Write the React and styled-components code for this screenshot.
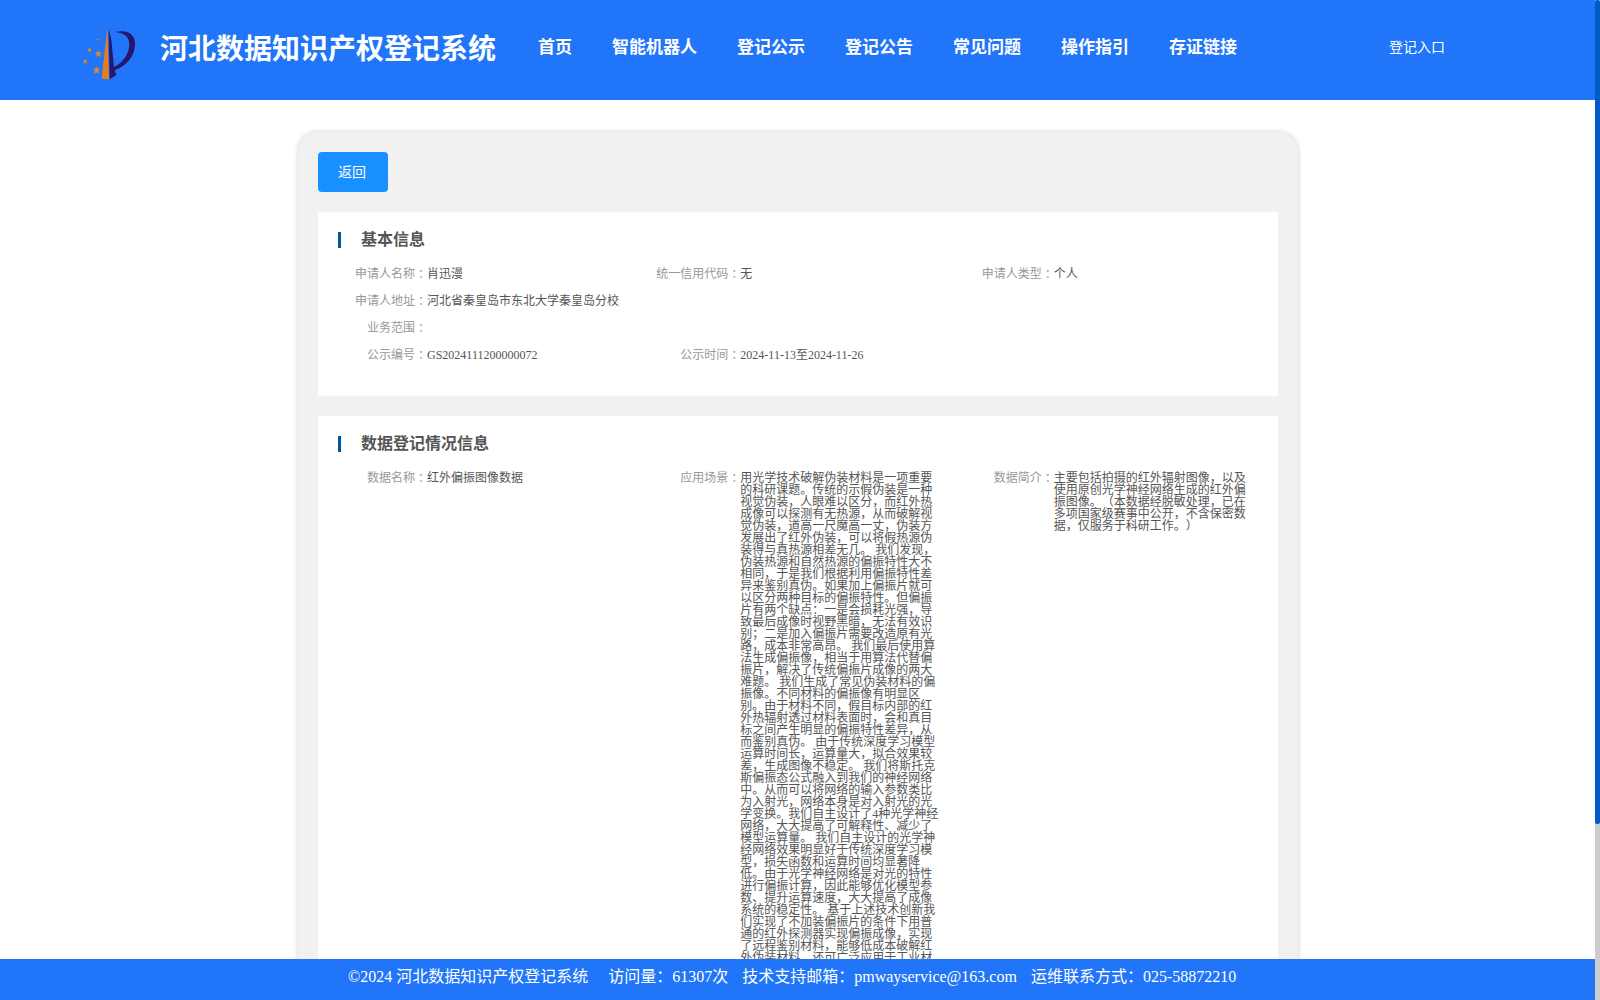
import React from "react";
import styled, { createGlobalStyle } from "styled-components";

const navList = [
  "首页",
  "智能机器人",
  "登记公示",
  "登记公告",
  "常见问题",
  "操作指引",
  "存证链接",
];

const basicRows = [
  [
    { label: "申请人名称", value: "肖迅漫" },
    { label: "统一信用代码", value: "无" },
    { label: "申请人类型", value: "个人" },
  ],
  [{ label: "申请人地址", value: "河北省秦皇岛市东北大学秦皇岛分校" }],
  [{ label: "业务范围", value: "" }],
  [
    { label: "公示编号", value: "GS2024111200000072" },
    { label: "公示时间", value: "2024-11-13至2024-11-26" },
  ],
];

const dataRows = [
  [
    { label: "数据名称", value: "红外偏振图像数据" },
    {
      label: "应用场景",
      value:
        "用光学技术破解伪装材料是一项重要的科研课题。传统的示假伪装是一种视觉伪装，人眼难以区分，而红外热成像可以探测有无热源，从而破解视觉伪装，道高一尺魔高一丈，伪装方发展出了红外伪装，可以将假热源伪装得与真热源相差无几。 我们发现，伪装热源和自然热源的偏振特性大不相同，于是我们根据利用偏振特性差异来鉴别真伪。如果加上偏振片就可以区分两种目标的偏振特性。但偏振片有两个缺点：一是会损耗光强，导致最后成像时视野黑暗，无法有效识别；二是加入偏振片需要改造原有光路，成本非常高昂。 我们最后使用算法生成偏振像，相当于用算法代替偏振片，解决了传统偏振片成像的两大难题。 我们生成了常见伪装材料的偏振像。不同材料的偏振像有明显区别。由于材料不同，假目标内部的红外热辐射透过材料表面时，会和真目标之间产生明显的偏振特性差异，从而鉴别真伪。 由于传统深度学习模型运算时间长，运算量大，拟合效果较差，生成图像不稳定。 我们将斯托克斯偏振态公式融入到我们的神经网络中。从而可以将网络的输入参数类比为入射光，网络本身是对入射光的光学变换。我们自主设计了4种光学神经网络，大大提高了可解释性、减少了模型运算量。 我们自主设计的光学神经网络效果明显好于传统深度学习模型，损失函数和运算时间均显著降低。由于光学神经网络是对光的特性进行偏振计算，因此能够优化模型参数、提升运算速度，大大提高了成像系统的稳定性。 基于上述技术创新我们实现了不加装偏振片的条件下用普通的红外探测器实现偏振成像，实现了远程鉴别材料，能够低成本破解红外伪装材料，还可广泛应用于工业材",
    },
    {
      label: "数据简介",
      value:
        "主要包括拍摄的红外辐射图像，以及使用原创光学神经网络生成的红外偏振图像。（本数据经脱敏处理，已在多项国家级赛事中公开，不含保密数据，仅服务于科研工作。）",
    },
  ],
];

const Logo = () => (
  <svg width="70" height="65" viewBox="0 0 210 195">
    <path d="M97 21L102 178L80 176Z" fill="#e87d1e" />
    <path
      d="M101 24L109 60L117 142C146 126 163 100 163 73C163 50 148 38 120 36C155 28 180 40 180 71C180 108 156 136 119 151L124 165L104 178Z"
      fill="#27156f"
    />
    <g fill="#dc8430">
      <path d="M70 89L73 97L81 98L75 103L77 111L70 107L63 111L65 103L60 98L67 97Z" />
      <path d="M65 138L68 146L76 147L70 152L73 161L65 157L57 161L59 152L54 146L62 146Z" />
      <path d="M44 82L46 87L51 88L47 91L48 96L43 94L38 96L40 90L37 86L42 87Z" />
      <path d="M31 116L33 121L38 122L34 126L35 131L31 129L26 131L27 125L24 121L29 121Z" />
      <path d="M69 54L70 57L73 58L70 60L70 63L67 60L64 60L67 57Z" />
    </g>
  </svg>
);

const Section = ({ title, rows }) => (
  <Card>
    <CardTitle>{title}</CardTitle>
    {rows.map((row, i) => (
      <Row key={i}>
        {row.map(({ label, value }) => (
          <Field key={label}>
            <Label>{label}</Label>
            <Value>{value}</Value>
          </Field>
        ))}
      </Row>
    ))}
  </Card>
);

const App = () => {
  return (
    <Layout>
      <GlobalStyle />
      <Page>
        <Header>
          <Logo />
          <SiteName>河北数据知识产权登记系统</SiteName>
          <Nav>
            {navList.map((item) => (
              <NavItem key={item}>{item}</NavItem>
            ))}
          </Nav>
          <Entry>登记入口</Entry>
        </Header>
        <Main>
          <Panel>
            <BackButton>返回</BackButton>
            <Section title="基本信息" rows={basicRows} />
            <Section title="数据登记情况信息" rows={dataRows} />
          </Panel>
        </Main>
        <Footer>
          <span>©2024 河北数据知识产权登记系统</span>
          <Visits>访问量：61307次</Visits>
          <Contact>技术支持邮箱：pmwayservice@163.com</Contact>
          <Contact>运维联系方式：025-58872210</Contact>
        </Footer>
      </Page>
      <ScrollTrack>
        <ScrollThumb />
      </ScrollTrack>
    </Layout>
  );
};

export default App;

const GlobalStyle = createGlobalStyle`
  * {
    box-sizing: border-box;
  }

  body {
    margin: 0;
    overflow: hidden;
    background: #fff;
    font-family: "Liberation Serif", "Noto Sans CJK SC", serif;
    text-spacing-trim: space-all;
  }
`;

const Layout = styled.div`
  display: flex;
  height: 1000px;
`;

const Page = styled.div`
  display: flex;
  flex-direction: column;
  flex: 1;
  min-width: 0;
`;

const Header = styled.header`
  display: flex;
  flex-shrink: 0;
  height: 100px;
  padding: 20px 0 0 75px;
  color: #fff;
  background: #2175f9;
`;

const SiteName = styled.h1`
  margin: 0 0 0 15px;
  font-size: 28px;
  line-height: 60px;
  white-space: nowrap;
`;

const Nav = styled.nav`
  display: flex;
  gap: 40px;
  margin-left: 42px;
`;

const NavItem = styled.a`
  font-size: 17px;
  font-weight: bold;
  line-height: 55px;
  white-space: nowrap;
`;

const Entry = styled.a`
  margin-left: 152px;
  font-size: 14px;
  line-height: 55px;
  white-space: nowrap;
`;

const Main = styled.main`
  flex: 1;
  min-height: 0;
  padding: 32px 0 0 298px;
  overflow: hidden;
`;

const Panel = styled.div`
  width: 1000px;
  min-height: 900px;
  padding: 20px;
  border-radius: 20px;
  background: #f1f1f1;
  box-shadow: 0 0 5px rgba(0, 0, 0, 0.2);
`;

const BackButton = styled.button`
  display: block;
  width: 70px;
  height: 40px;
  padding: 0 2px 2px 0;
  border: none;
  border-radius: 4px;
  color: #fff;
  background: #1990ff;
  font-family: inherit;
  font-size: 14px;
`;

const Card = styled.section`
  margin-top: 20px;
  padding: 20px 0 20px 20px;
  background: #fff;
`;

const CardTitle = styled.h2`
  height: 16px;
  margin: 0 0 20px;
  padding-left: 20px;
  border-left: 3px solid #00579b;
  color: #555;
  font-size: 16px;
  line-height: 15px;
`;

const Row = styled.div`
  display: grid;
  grid-template-columns: repeat(3, 1fr);
  margin-bottom: 15px;
  font-size: 12px;
  line-height: 12px;
`;

const Field = styled.div`
  display: flex;
`;

const Label = styled.div`
  display: flex;
  justify-content: flex-end;
  width: 89px;
  height: 12px;
  flex-shrink: 0;
  color: #999;

  &::after {
    content: "：";
    font-family: "Noto Sans CJK JP", sans-serif;
  }
`;

const Value = styled.div`
  width: 200px;
  color: #555;
`;

const Footer = styled.footer`
  display: flex;
  flex-shrink: 0;
  height: 41px;
  padding-left: 348px;
  color: #fff;
  background: #2175f9;
  font-size: 16px;
  line-height: 35px;
  white-space: nowrap;
`;

const Visits = styled.span`
  margin-left: 20px;
`;

const Contact = styled.span`
  margin-left: 14px;
`;

const ScrollTrack = styled.div`
  width: 5px;
  background: #ccc;
`;

const ScrollThumb = styled.div`
  height: 824px;
  border-radius: 2px;
  background: #005bc9;
`;
